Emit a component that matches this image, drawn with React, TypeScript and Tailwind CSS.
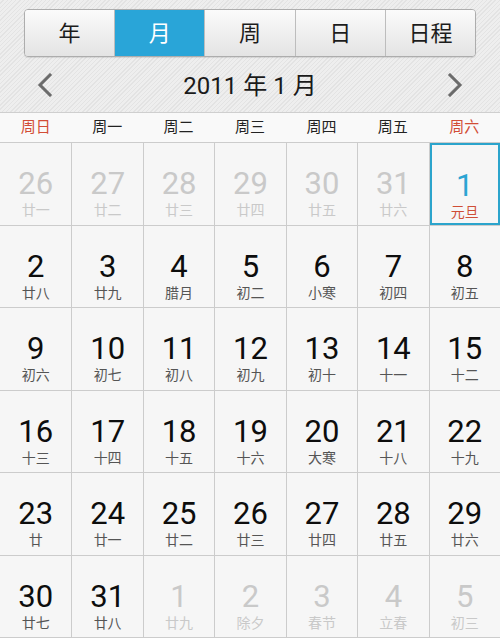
import React from "react";

const TABS = ["年", "月", "周", "日", "日程"];
const WEEK = ["周日", "周一", "周二", "周三", "周四", "周五", "周六"];

type Day = { n: number; l: string; dim?: boolean; sel?: boolean };

const d = (n: number, l: string, dim = false): Day => ({ n, l, dim });

const ROWS: Day[][] = [
  [d(26, "廿一", true), d(27, "廿二", true), d(28, "廿三", true), d(29, "廿四", true), d(30, "廿五", true), d(31, "廿六", true), { n: 1, l: "元旦", sel: true }],
  [d(2, "廿八"), d(3, "廿九"), d(4, "腊月"), d(5, "初二"), d(6, "小寒"), d(7, "初四"), d(8, "初五")],
  [d(9, "初六"), d(10, "初七"), d(11, "初八"), d(12, "初九"), d(13, "初十"), d(14, "十一"), d(15, "十二")],
  [d(16, "十三"), d(17, "十四"), d(18, "十五"), d(19, "十六"), d(20, "大寒"), d(21, "十八"), d(22, "十九")],
  [d(23, "廿"), d(24, "廿一"), d(25, "廿二"), d(26, "廿三"), d(27, "廿四"), d(28, "廿五"), d(29, "廿六")],
  [d(30, "廿七"), d(31, "廿八"), d(1, "廿九", true), d(2, "除夕", true), d(3, "春节", true), d(4, "立春", true), d(5, "初三", true)],
];

function Chevron({ dir }: { dir: "l" | "r" }) {
  return (
    <svg width="16" height="24" viewBox="0 0 16 24" fill="none">
      <path
        d={dir === "l" ? "M13 2 L3 12 L13 22" : "M3 2 L13 12 L3 22"}
        stroke="#6b6b6b"
        strokeWidth="3"
        strokeLinecap="square"
      />
    </svg>
  );
}

export default function App() {
  return (
    <div
      className="w-[500px] h-[638px] overflow-hidden bg-[#f6f6f6] text-[#1a1a1a]"
      style={{ fontFamily: 'Roboto, "Noto Sans CJK SC", sans-serif' }}
    >
      <div className="bg-[repeating-linear-gradient(135deg,#eeeeee_0px,#eeeeee_2px,#e3e3e3_2px,#e3e3e3_3px)] border-b border-[#cfcfcf]">
        <div className="pt-[9px] px-[24px]">
          <div className="flex h-[48px] rounded-[4px] border border-[#adadad] overflow-hidden shadow-[0_1px_1px_rgba(0,0,0,0.1)]">
            {TABS.map((t, i) => (
              <div
                key={t}
                className={`flex-1 flex items-center justify-center text-[22px] ${i > 0 ? "border-l border-[#bdbdbd]" : ""} ${
                  i === 1
                    ? "bg-[#29a5d8] text-white"
                    : "bg-[linear-gradient(#fbfbfb,#e4e4e4)] text-[#1c1c1c]"
                }`}
              >
                {t}
              </div>
            ))}
          </div>
        </div>
        <div className="h-[55px] flex items-center justify-between px-[37px]">
          <Chevron dir="l" />
          <div className="text-[24px] text-[#1a1a1a] pt-[2px]">2011 年 1 月</div>
          <Chevron dir="r" />
        </div>
      </div>

      <div className="grid grid-cols-7 h-[30px] bg-[#f9f9f9] border-b border-[#cccccc]">
        {WEEK.map((w, i) => (
          <div
            key={w}
            className={`flex items-center justify-center text-[15px] ${i === 0 || i === 6 ? "text-[#d24d36]" : "text-[#222]"}`}
          >
            {w}
          </div>
        ))}
      </div>

      <div>
        {ROWS.map((row, r) => (
          <div key={r} className="grid grid-cols-7 h-[82.5px] border-b border-[#cccccc]">
            {row.map((c, i) => (
              <div key={i} className={`relative ${i > 0 ? "border-l border-[#cccccc]" : ""}`}>
                <div
                  className={`h-full flex flex-col items-center pt-[24px] ${
                    c.sel ? "border-2 border-[#2ba4cc] pt-[22px]" : ""
                  }`}
                >
                  <div
                    className={`text-[31px] leading-[34px] ${
                      c.sel ? "text-[#2ba4d2]" : c.dim ? "text-[#c9c9c9]" : "text-[#0d0d0d]"
                    }`}
                  >
                    {c.n}
                  </div>
                  <div
                    className={`text-[14px] leading-[18px] ${
                      c.sel ? "text-[#cf4e36]" : c.dim ? "text-[#c9c9c9]" : "text-[#555]"
                    }`}
                  >
                    {c.l}
                  </div>
                </div>
              </div>
            ))}
          </div>
        ))}
      </div>
    </div>
  );
}
